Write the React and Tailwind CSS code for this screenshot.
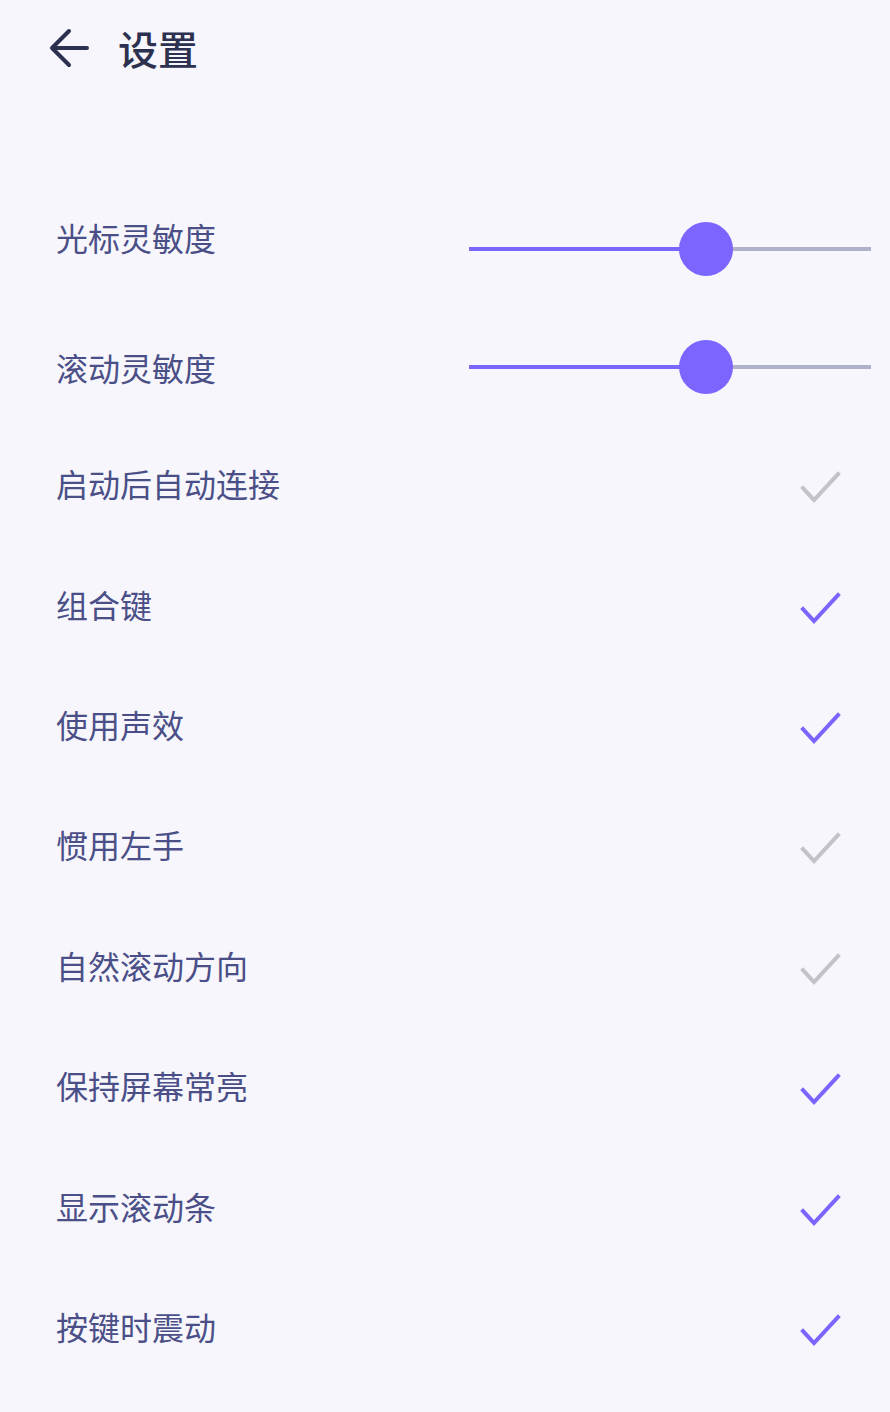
import { useState } from 'react';

const font = { fontFamily: '"Noto Sans CJK SC", "Noto Sans", sans-serif' };

const toggles = [
  { label: '启动后自动连接', on: false },
  { label: '组合键', on: true },
  { label: '使用声效', on: true },
  { label: '惯用左手', on: false },
  { label: '自然滚动方向', on: false },
  { label: '保持屏幕常亮', on: true },
  { label: '显示滚动条', on: true },
  { label: '按键时震动', on: true },
];

function BackArrow() {
  return (
    <svg width="40" height="40" viewBox="0 0 40 40" fill="none" className="shrink-0">
      <path d="M38 20H3M20 3L3 20l17 17" stroke="#2d3150" strokeWidth="4" strokeLinecap="round" strokeLinejoin="round" />
    </svg>
  );
}

function Check({ on }) {
  return (
    <svg width="42" height="32" viewBox="0 0 42 32" fill="none">
      <path d="M4 17l11 12L39 3" stroke={on ? '#7a66ff' : '#c2c2c8'} strokeWidth="4" strokeLinecap="square" />
    </svg>
  );
}

function Slider({ value }) {
  return (
    <div className="relative h-[54px] w-[402px] flex items-center">
      <div className="h-[4px] w-full bg-[#aeb2cb]" />
      <div className="absolute left-0 top-[25px] h-[4px] bg-[#7a66ff]" style={{ width: `${value * 100}%` }} />
      <div
        className="absolute top-0 h-[54px] w-[54px] -translate-x-1/2 rounded-full bg-[#7a66ff]"
        style={{ left: `${value * 100}%` }}
      />
    </div>
  );
}

export default function App() {
  const [items] = useState(toggles);

  return (
    <div className="min-h-[1412px] w-[890px] bg-[#f6f6fc]" style={font}>
      <header className="flex h-[96px] items-center pl-[49px]">
        <BackArrow />
        <h1 className="ml-[29px] text-[40px] font-medium leading-none text-[#2d3150]">设置</h1>
      </header>

      <div className="pt-[80px]">
        <div className="flex h-[128px] items-center justify-between pl-[56px] pr-[19px]">
          <span className="-mt-[6px] text-[32px] leading-none text-[#4b4f87]">光标灵敏度</span>
          <div className="mt-[18px]">
            <Slider value={0.59} />
          </div>
        </div>
        <div className="flex h-[123px] items-center justify-between pl-[56px] pr-[19px]">
          <span className="mt-[2px] text-[32px] leading-none text-[#4b4f87]">滚动灵敏度</span>
          <div className="mt-[2px]">
            <Slider value={0.59} />
          </div>
        </div>

        {items.map((item) => (
          <div key={item.label} className="flex h-[120.4px] items-center justify-between pl-[56px] pr-[49px]">
            <span className="-mt-[8px] text-[32px] leading-none text-[#4b4f87]">{item.label}</span>
            <Check on={item.on} />
          </div>
        ))}
      </div>
    </div>
  );
}
